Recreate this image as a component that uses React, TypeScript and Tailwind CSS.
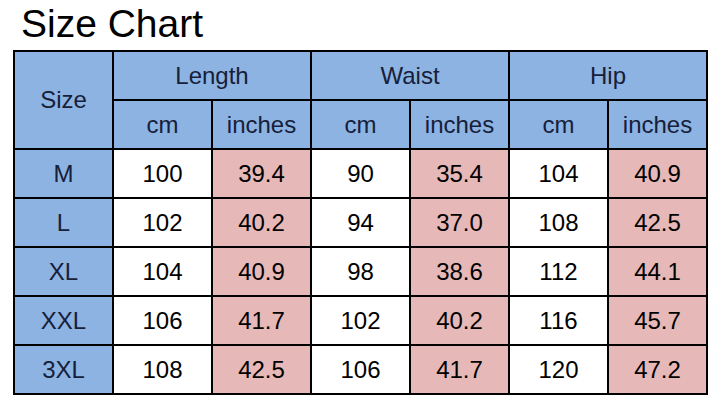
import React from 'react';

const rows = [
    { size: 'M', vals: ['100', '39.4', '90', '35.4', '104', '40.9'] },
    { size: 'L', vals: ['102', '40.2', '94', '37.0', '108', '42.5'] },
    { size: 'XL', vals: ['104', '40.9', '98', '38.6', '112', '44.1'] },
    { size: 'XXL', vals: ['106', '41.7', '102', '40.2', '116', '45.7'] },
    { size: '3XL', vals: ['108', '42.5', '106', '41.7', '120', '47.2'] },
];

const head = 'bg-[#8db3e2] text-[#16203a] flex items-center justify-center';

export default function App() {
    return (
        <div className="w-[724px] h-[408px] bg-white font-['Liberation_Sans',Arial,sans-serif]">
            <div className="pl-[21px] pt-[4px] text-[39px] leading-[39px] text-black">Size Chart</div>
            <div className="ml-[13px] mt-[7px] inline-grid grid-cols-[repeat(7,97px)] grid-rows-[repeat(7,47px)] gap-[2px] p-[2px] bg-black text-[24px]">
                <div className={`${head} row-span-2`}>Size</div>
                <div className={`${head} col-span-2`}>Length</div>
                <div className={`${head} col-span-2`}>Waist</div>
                <div className={`${head} col-span-2`}>Hip</div>
                {['cm', 'inches', 'cm', 'inches', 'cm', 'inches'].map((u, i) => (
                    <div key={i} className={head}>{u}</div>
                ))}
                {rows.map(r => (
                    <React.Fragment key={r.size}>
                        <div className={head}>{r.size}</div>
                        {r.vals.map((v, i) => (
                            <div
                                key={i}
                                className={`flex items-center justify-center text-black ${i % 2 ? 'bg-[#e6b8b7]' : 'bg-white'}`}
                            >
                                {v}
                            </div>
                        ))}
                    </React.Fragment>
                ))}
            </div>
        </div>
    );
}
